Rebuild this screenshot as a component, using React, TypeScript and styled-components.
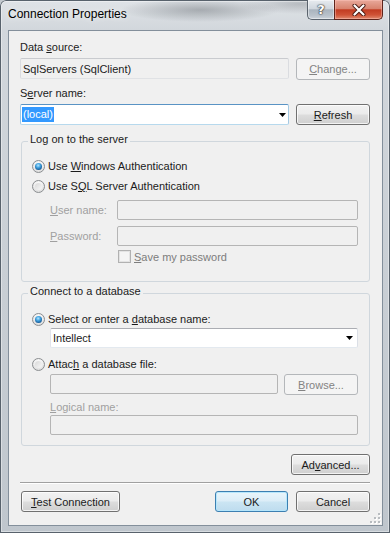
import React from 'react';
import styled, { createGlobalStyle, css } from 'styled-components';

const GlobalStyle = createGlobalStyle`
  * { box-sizing: border-box; }
  html, body { margin: 0; padding: 0; }
  body {
    background: #c3c9cf;
    font-family: "Liberation Sans", Arial, sans-serif;
    font-size: 11px;
    color: #1b1b1b;
  }
`;

const Window = styled.div`
  position: relative;
  width: 390px;
  height: 533px;
  display: flex;
  flex-direction: column;
  border-radius: 6px 6px 0 0;
  overflow: hidden;
  background:
    radial-gradient(ellipse 80px 12px at 200px 10px, rgba(70, 76, 82, 0.35), rgba(70, 76, 82, 0) 100%),
    radial-gradient(ellipse 60px 10px at 300px 4px, rgba(70, 76, 82, 0.25), rgba(70, 76, 82, 0) 100%),
    linear-gradient(to bottom, #dfe3e7 0px, #d2d7dc 30px, #bfc6cd 100%);
  box-shadow: inset 0 0 0 1px #58626c, inset 0 0 0 2px rgba(255, 255, 255, 0.4);
`;

const TitleBar = styled.div`
  flex: none;
  height: 30px;
  display: flex;
  align-items: flex-start;
  padding: 0 7px 0 8px;
`;

const Title = styled.div`
  flex: 1;
  height: 30px;
  line-height: 29px;
  font-size: 12px;
  color: #000;
  text-shadow: 0 0 6px rgba(255, 255, 255, 0.9);
  white-space: nowrap;
`;

const Captions = styled.div`
  display: flex;
  flex: none;
`;

const CaptionButton = styled.div<{ $kind: 'help' | 'close' }>`
  height: 20px;
  display: flex;
  align-items: center;
  justify-content: center;
  border: 1px solid;
  border-top: none;
  ${p =>
    p.$kind === 'close'
      ? css`
          width: 49px;
          border-color: #5e241b;
          border-radius: 0 0 5px 0;
          background: linear-gradient(to bottom, #e8a99b 0%, #d8836f 45%, #c23c22 52%, #cf5236 78%, #e08a6f 100%);
          box-shadow: inset 0 0 0 1px rgba(255, 200, 190, 0.45);
        `
      : css`
          width: 27px;
          border-color: #5a636d;
          border-right: none;
          border-radius: 0 0 0 5px;
          background: linear-gradient(to bottom, #e7ebef 0%, #d0d7de 45%, #aab4be 52%, #b8c1ca 80%, #cbd2d9 100%);
          box-shadow: inset 0 0 0 1px rgba(255, 255, 255, 0.45);
        `}
`;

const HelpGlyph = styled.span`
  font-family: "DejaVu Sans", sans-serif;
  font-weight: bold;
  font-size: 13px;
  line-height: 13px;
  color: #fff;
  text-shadow: 0 0 1px #333, 0 0 2px #333, 0 0 1px #333;
`;

const Client = styled.div`
  position: relative;
  flex: 1;
  margin: 0 7px 7px 8px;
  border: 1px solid #838f9b;
  background: #f0f0f0;
  padding: 10px 12px 0 11px;
  display: flex;
  flex-direction: column;
`;

const Label = styled.div<{ $mt?: number; $disabled?: boolean; $w?: number }>`
  margin-top: ${p => p.$mt ?? 0}px;
  height: 13px;
  line-height: 13px;
  white-space: nowrap;
  flex: none;
  width: ${p => (p.$w ? `${p.$w}px` : 'auto')};
  color: ${p => (p.$disabled ? '#a0a0a0' : '#1b1b1b')};
`;

const Row = styled.div<{ $mt?: number; $gap?: number; $indent?: number; $align?: string }>`
  display: flex;
  align-items: ${p => p.$align ?? 'flex-start'};
  margin-top: ${p => p.$mt ?? 0}px;
  margin-left: ${p => p.$indent ?? 0}px;
  gap: ${p => p.$gap ?? 0}px;
`;

type FieldState = 'normal' | 'focused' | 'readonly' | 'disabled';

const fieldLook: Record<FieldState, ReturnType<typeof css>> = {
  normal: css`
    background: #fff;
    border-color: #abadb3 #dbdfe6 #e3e9ef #e2e3ea;
  `,
  focused: css`
    background: #fff;
    border-color: #5993c4 #a4c9e3 #b7d9ed #a4c9e3;
  `,
  readonly: css`
    background: #f0f0f0;
    border-color: #c9cbcf #dadce0 #e0e2e5 #dadce0;
  `,
  disabled: css`
    background: #f0f0f0;
    border-color: #b5b5b5;
  `,
};

const Field = styled.div<{ $state: FieldState; $w?: number; $h?: number; $arrowGap?: number }>`
  flex: ${p => (p.$w ? 'none' : '1')};
  width: ${p => (p.$w ? `${p.$w}px` : 'auto')};
  height: ${p => p.$h ?? 20}px;
  border: 1px solid;
  border-radius: 2px;
  display: flex;
  align-items: center;
  padding: 0 ${p => p.$arrowGap ?? 2}px 0 2px;
  white-space: nowrap;
  ${p => fieldLook[p.$state]}
`;

const Selected = styled.span`
  background: #3399ff;
  color: #fff;
  line-height: 15px;
  padding: 0 1px;
  margin-left: -1px;
`;

const Arrow = styled.svg`
  margin-left: auto;
  flex: none;
  display: block;
`;

const DropArrow = () => (
  <Arrow width="7" height="4" viewBox="0 0 7 4">
    <path d="M0 0H7L3.5 4Z" fill="#000" />
  </Arrow>
);

type BtnKind = 'normal' | 'disabled' | 'default';

const Button = styled.div<{ $w: number; $h?: number; $kind?: BtnKind; $ml?: number }>`
  flex: none;
  width: ${p => p.$w}px;
  height: ${p => p.$h ?? 21}px;
  margin-left: ${p => p.$ml ?? 0}px;
  border: 1px solid #707070;
  border-radius: 3px;
  display: flex;
  align-items: center;
  justify-content: center;
  white-space: nowrap;
  color: #1b1b1b;
  background: linear-gradient(to bottom, #f2f2f2 0%, #ebebeb 48%, #dddddd 52%, #cfcfcf 100%);
  box-shadow: inset 0 0 0 1px rgba(255, 255, 255, 0.75);
  ${p =>
    p.$kind === 'disabled' &&
    css`
      border-color: #b4b7ba;
      background: #f4f4f4;
      box-shadow: none;
      color: #838383;
    `}
  ${p =>
    p.$kind === 'default' &&
    css`
      border-color: #3c7fb1;
      background: linear-gradient(to bottom, #e9f5fb 0%, #dcedf7 48%, #cbe5f3 52%, #bedcee 100%);
      box-shadow: inset 0 0 0 1px rgba(178, 230, 252, 0.9);
    `}
`;

const Group = styled.fieldset<{ $mt: number }>`
  margin: ${p => p.$mt}px 0 0 1px;
  padding: 0;
  min-width: 0;
  border: 1px solid #d0d7dd;
  border-radius: 3px;
`;

const Legend = styled.legend`
  margin-left: 6px;
  padding: 0 2px 4px;
  line-height: 13px;
  color: #1b1b1b;
  white-space: nowrap;
`;

const GroupBody = styled.div<{ $pt: number; $pb: number }>`
  padding: ${p => p.$pt}px 11px ${p => p.$pb}px 10px;
  display: flex;
  flex-direction: column;
`;

const Option = styled.div<{ $mt?: number }>`
  display: flex;
  align-items: center;
  gap: 3px;
  height: 16px;
  margin-top: ${p => p.$mt ?? 0}px;
  white-space: nowrap;
`;

const RadioCircle = styled.span<{ $checked?: boolean }>`
  width: 13px;
  height: 13px;
  flex: none;
  border-radius: 50%;
  border: 1px solid #8b8e91;
  background: radial-gradient(circle at 50% 30%, #ffffff 0%, #eeeeee 45%, #d3d3d3 100%);
  display: flex;
  align-items: center;
  justify-content: center;
  &::after {
    content: '';
    width: 7px;
    height: 7px;
    border-radius: 50%;
    ${p =>
      p.$checked
        ? css`
            background: radial-gradient(circle at 45% 35%, #b6e6ff 0%, #46a6e2 35%, #135a98 75%, #0b3b6a 100%);
          `
        : css`
            background: linear-gradient(135deg, #d9d9d9 0%, #f7f7f7 100%);
          `}
  }
`;

const CheckBox = styled.span`
  width: 13px;
  height: 13px;
  flex: none;
  border: 1px solid #b1b1b1;
  background: #f4f4f4;
  box-shadow: inset 0 0 0 1px #e3e3e3;
`;

const CheckText = styled.span`
  color: #7d7d7d;
`;

const Separator = styled.div`
  margin-top: 7px;
  height: 2px;
  border-top: 1px solid #a0a0a0;
  border-bottom: 1px solid #ffffff;
`;

const RightRow = styled.div<{ $mt: number }>`
  display: flex;
  justify-content: flex-end;
  margin-top: ${p => p.$mt}px;
`;

const BottomRow = styled.div`
  display: flex;
  align-items: flex-start;
  margin-top: 7px;
  gap: 8px;
`;

const Spacer = styled.div`
  flex: 1;
`;

const U = styled.span`
  text-decoration: underline;
  text-underline-offset: 1px;
`;

const Grip = styled.svg`
  position: absolute;
  right: 1px;
  bottom: 1px;
  display: block;
`;

const CloseX = () => (
  <svg width="14" height="12" viewBox="0 0 14 12">
    <path d="M2.5 1.5L11.5 10.5M11.5 1.5L2.5 10.5" stroke="#4a1a12" strokeWidth="4" strokeLinecap="round" />
    <path d="M2.5 1.5L11.5 10.5M11.5 1.5L2.5 10.5" stroke="#ffffff" strokeWidth="2.2" strokeLinecap="round" />
  </svg>
);

const ResizeGrip = () => {
  const dots: [number, number][] = [
    [8, 0],
    [4, 4],
    [8, 4],
    [0, 8],
    [4, 8],
    [8, 8],
  ];
  return (
    <Grip width="11" height="11" viewBox="0 0 11 11">
      {dots.map(([x, y]) => (
        <g key={`${x}-${y}`}>
          <rect x={x + 1} y={y + 1} width="2" height="2" fill="#ffffff" />
          <rect x={x} y={y} width="2" height="2" fill="#b8bcc0" />
        </g>
      ))}
    </Grip>
  );
};

export default function App() {
  return (
    <>
      <GlobalStyle />
      <Window>
        <TitleBar>
          <Title>Connection Properties</Title>
          <Captions>
            <CaptionButton $kind="help">
              <HelpGlyph>?</HelpGlyph>
            </CaptionButton>
            <CaptionButton $kind="close">
              <CloseX />
            </CaptionButton>
          </Captions>
        </TitleBar>
        <Client>
          <Label>
            Data <U>s</U>ource:
          </Label>
          <Row $mt={4} $gap={7}>
            <Field $state="readonly" $w={269} $h={21}>
              SqlServers (SqlClient)
            </Field>
            <Button $w={74} $h={22} $kind="disabled">
              <span>
                <U>C</U>hange...
              </span>
            </Button>
          </Row>

          <Label $mt={7}>
            S<U>e</U>rver name:
          </Label>
          <Row $mt={4} $gap={7}>
            <Field $state="focused" $w={269} $h={21}>
              <Selected>(local)</Selected>
              <DropArrow />
            </Field>
            <Button $w={74}>
              <span>
                <U>R</U>efresh
              </span>
            </Button>
          </Row>

          <Group $mt={8}>
            <Legend>Log on to the server</Legend>
            <GroupBody $pt={8} $pb={18}>
              <Option>
                <RadioCircle $checked />
                <span>
                  Use <U>W</U>indows Authentication
                </span>
              </Option>
              <Option $mt={4}>
                <RadioCircle />
                <span>
                  Use S<U>Q</U>L Server Authentication
                </span>
              </Option>
              <Row $mt={6} $indent={18} $align="center">
                <Label $disabled $w={67}>
                  <U>U</U>ser name:
                </Label>
                <Field $state="disabled" />
              </Row>
              <Row $mt={6} $indent={18} $align="center">
                <Label $disabled $w={67}>
                  <U>P</U>assword:
                </Label>
                <Field $state="disabled" />
              </Row>
              <Row $mt={4} $indent={86} $gap={3} $align="center">
                <CheckBox />
                <CheckText>
                  <U>S</U>ave my password
                </CheckText>
              </Row>
            </GroupBody>
          </Group>

          <Group $mt={3}>
            <Legend>Connect to a database</Legend>
            <GroupBody $pt={9} $pb={10}>
              <Option>
                <RadioCircle $checked />
                <span>
                  Select or enter a <U>d</U>atabase name:
                </span>
              </Option>
              <Row $mt={1} $indent={18}>
                <Field $state="normal" $arrowGap={4}>
                  Intellect
                  <DropArrow />
                </Field>
              </Row>
              <Option $mt={8}>
                <RadioCircle />
                <span>
                  Attac<U>h</U> a database file:
                </span>
              </Option>
              <Row $mt={2} $indent={18} $gap={6}>
                <Field $state="disabled" />
                <Button $w={74} $kind="disabled">
                  <span>
                    <U>B</U>rowse...
                  </span>
                </Button>
              </Row>
              <Row $mt={6} $indent={18}>
                <Label $disabled>
                  <U>L</U>ogical name:
                </Label>
              </Row>
              <Row $mt={1} $indent={18}>
                <Field $state="disabled" />
              </Row>
            </GroupBody>
          </Group>

          <RightRow $mt={8}>
            <Button $w={79}>
              <span>
                Ad<U>v</U>anced...
              </span>
            </Button>
          </RightRow>

          <Separator />

          <BottomRow>
            <Button $w={99} $ml={1}>
              <span>
                <U>T</U>est Connection
              </span>
            </Button>
            <Spacer />
            <Button $w={73} $kind="default">
              OK
            </Button>
            <Button $w={74}>Cancel</Button>
          </BottomRow>
          <ResizeGrip />
        </Client>
      </Window>
    </>
  );
}
